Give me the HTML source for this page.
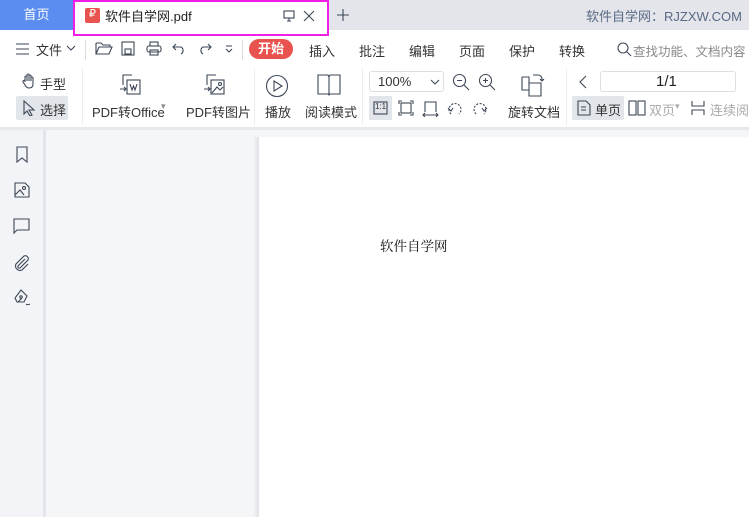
<!DOCTYPE html>
<html><head><meta charset="utf-8"><style>
*{margin:0;padding:0;box-sizing:border-box}
body{width:749px;height:517px;overflow:hidden;font-family:"Liberation Sans","Noto Sans CJK SC",sans-serif;background:#f5f6f8;position:relative;color:#333;font-size:13px}
.abs{position:absolute}
svg{position:absolute;fill:none;stroke:#3d4757;stroke-width:1.1}
.t{position:absolute;white-space:nowrap}
</style></head><body>
<div class="abs" style="left:0;top:0;width:749px;height:30px;background:#e3e5ea"></div>
<div class="abs" style="left:0;top:0;width:73px;height:30px;background:#5b8cf0;color:#fff;font-size:13px;text-align:center;line-height:30px">首页</div>
<div class="abs" style="left:73px;top:0;width:256px;height:36px;background:#fff;border:2px solid #f01ee6"></div>
<div class="abs" style="left:85px;top:8px;width:15px;height:15px;background:#e8534f;border-radius:2px"></div>
<div class="t" style="left:89px;top:7px;color:#fff;font-size:11px">₽</div>
<div class="t" style="left:105px;top:6px;font-size:13px;color:#222">软件自学网.pdf</div>
<svg style="left:282px;top:9px" width="14" height="14" viewBox="0 0 14 14" stroke="#aaa"><rect x="2" y="2" width="10" height="7"/><path d="M7 9v3M5 12h4"/></svg>
<svg style="left:302px;top:9px" width="14" height="14" viewBox="0 0 14 14" stroke="#aaa"><path d="M2 2l10 10M12 2L2 12"/></svg>
<svg style="left:335px;top:7px" width="16" height="16" viewBox="0 0 16 16" stroke="#3d4757" stroke-width="2"><path d="M8 2v12M2 8h12"/></svg>
<div class="t" style="left:586px;top:6px;color:#5a6a85;font-size:13px">软件自学网：RJZXW.COM</div>
<div class="abs" style="left:0;top:36px;width:749px;height:92px;background:#fff"></div>
<div class="abs" style="left:0;top:30px;width:73px;height:6px;background:#fff"></div>
<div class="abs" style="left:329px;top:30px;width:420px;height:6px;background:#fff"></div>
<!-- menu row -->
<svg style="left:15px;top:42px" width="16" height="14" viewBox="0 0 16 14"><path d="M1 2h13M1 7h13M1 12h13"/></svg>
<div class="t" style="left:36px;top:40px">文件</div>
<svg style="left:66px;top:44px" width="10" height="8" viewBox="0 0 10 8" stroke="#888"><path d="M1 2l4 4 4-4"/></svg>
<div class="abs" style="left:85px;top:40px;width:1px;height:20px;background:#ddd"></div>
<svg style="left:95px;top:41px" width="18" height="15" viewBox="0 0 18 15"><path d="M1 2h5l2 2h7v2M1 2v11h13l3-7H4l-3 7"/></svg>
<svg style="left:121px;top:41px" width="14" height="15" viewBox="0 0 14 15" stroke="#bbb"><rect x="1" y="1" width="12" height="13"/><rect x="4" y="8" width="6" height="5"/></svg>
<svg style="left:146px;top:41px" width="16" height="15" viewBox="0 0 16 15" stroke-width="1.5"><rect x="4" y="1" width="8" height="4"/><rect x="1" y="5" width="14" height="6" rx="2"/><rect x="4" y="9" width="8" height="5"/></svg>
<svg style="left:172px;top:42px" width="14" height="13" viewBox="0 0 14 13" stroke="#bbb"><path d="M4 2L1 5l3 3M1 5h8a4 4 0 010 7"/></svg>
<svg style="left:198px;top:42px" width="14" height="13" viewBox="0 0 14 13" stroke="#bbb"><path d="M10 2l3 3-3 3M13 5H5a4 4 0 000 7"/></svg>
<svg style="left:224px;top:45px" width="10" height="8" viewBox="0 0 10 8"><path d="M2 1h6M2 4l3 3 3-3"/></svg>
<div class="abs" style="left:242px;top:40px;width:1px;height:20px;background:#ddd"></div>
<div class="t" style="left:249px;top:39px;width:44px;height:20px;background:#e8534f;border-radius:10px;color:#fff;text-align:center;line-height:20px;font-weight:bold">开始</div>
<div class="t" style="left:309px;top:41px">插入</div>
<div class="t" style="left:359px;top:41px">批注</div>
<div class="t" style="left:409px;top:41px">编辑</div>
<div class="t" style="left:459px;top:41px">页面</div>
<div class="t" style="left:509px;top:41px">保护</div>
<div class="t" style="left:559px;top:41px">转换</div>
<svg style="left:617px;top:42px" width="15" height="15" viewBox="0 0 15 15" stroke="#999"><circle cx="6" cy="6" r="5"/><path d="M10 10l4 4"/></svg>
<div class="t" style="left:633px;top:41px;color:#888;font-size:12.5px">查找功能、文档内容</div>
<!-- toolbar -->
<svg style="left:21px;top:73px" width="16" height="16" viewBox="0 0 16 16"><path d="M4 9V4a1 1 0 012 0v4V2a1 1 0 012 0v6V3a1 1 0 012 0v5V5a1 1 0 012 0v6c0 3-2 4-4 4H8c-2 0-3-1-4-3L2 9a1 1 0 012-1"/></svg>
<div class="t" style="left:40px;top:74px">手型</div>
<div class="abs" style="left:16px;top:96px;width:52px;height:24px;background:#e2e5ea;border-radius:2px"></div>
<svg style="left:22px;top:100px" width="14" height="16" viewBox="0 0 14 16"><path d="M2 1v13l3-3 3 5 2-1-3-5h5z"/></svg>
<div class="t" style="left:40px;top:100px">选择</div>
<div class="abs" style="left:82px;top:68px;width:1px;height:57px;background:#eee"></div>
<svg style="left:118px;top:73px" width="24" height="24" viewBox="0 0 24 24"><path d="M5 12V2h9M2 16h6M6 14l2 2-2 2"/><rect x="9" y="7" width="13" height="14"/><path d="M12 11l2 6 1.5-4 1.5 4 2-6"/></svg>
<div class="t" style="left:92px;top:102px">PDF转Office</div>
<div class="t" style="left:161px;top:101px;color:#888;font-size:9px">▾</div>
<svg style="left:202px;top:73px" width="24" height="24" viewBox="0 0 24 24"><path d="M5 12V2h9M2 16h6M6 14l2 2-2 2"/><rect x="9" y="7" width="13" height="14"/><path d="M10 20l5-6 3 3 3-3"/><circle cx="18" cy="11" r="1.5"/></svg>
<div class="t" style="left:186px;top:102px">PDF转图片</div>
<div class="abs" style="left:254px;top:68px;width:1px;height:57px;background:#eee"></div>
<svg style="left:265px;top:74px" width="24" height="24" viewBox="0 0 24 24"><circle cx="12" cy="12" r="10.5"/><path d="M9 7v10l8-5z"/></svg>
<div class="t" style="left:265px;top:102px">播放</div>
<svg style="left:316px;top:73px" width="26" height="24" viewBox="0 0 26 24"><path d="M2 2h10l1 2 1-2h10v19H14l-1 1-1-1H2zM13 4v17"/></svg>
<div class="t" style="left:305px;top:102px">阅读模式</div>
<div class="abs" style="left:362px;top:68px;width:1px;height:57px;background:#eee"></div>
<div class="abs" style="left:369px;top:71px;width:75px;height:21px;border:1px solid #dcdfe4;border-radius:3px"></div>
<div class="t" style="left:378px;top:74px">100%</div>
<svg style="left:430px;top:78px" width="10" height="8" viewBox="0 0 10 8" stroke="#999"><path d="M1 2l4 4 4-4"/></svg>
<svg style="left:452px;top:73px" width="18" height="18" viewBox="0 0 18 18"><circle cx="7.5" cy="7.5" r="6"/><path d="M12 12l5 5M5 7.5h5"/></svg>
<svg style="left:478px;top:73px" width="18" height="18" viewBox="0 0 18 18"><circle cx="7.5" cy="7.5" r="6"/><path d="M12 12l5 5M5 7.5h5M7.5 5v5"/></svg>
<div class="abs" style="left:369px;top:96px;width:23px;height:24px;background:#e2e5ea"></div>
<svg style="left:373px;top:101px" width="15" height="14" viewBox="0 0 15 14"><rect x="1" y="1" width="13" height="12"/></svg>
<div class="t" style="left:375px;top:102px;font-size:8px">1:1</div>
<svg style="left:398px;top:100px" width="16" height="16" viewBox="0 0 16 16"><rect x="3" y="3" width="10" height="10"/><path d="M1 4V1h3M12 1h3v3M15 12v3h-3M4 15H1v-3"/></svg>
<svg style="left:422px;top:100px" width="17" height="17" viewBox="0 0 17 17"><path d="M3 12V2h11v10M1 15h15M3 13l-2 2 2 2M14 13l2 2-2 2"/></svg>
<svg style="left:447px;top:101px" width="16" height="14" viewBox="0 0 16 14"><path d="M4 13a6 6 0 1 1 8 0" stroke-dasharray="2 1.5"/><path d="M1 7l3 3 2-3"/></svg>
<svg style="left:472px;top:101px" width="16" height="14" viewBox="0 0 16 14"><path d="M4 13a6 6 0 1 1 8 0" stroke-dasharray="2 1.5"/><path d="M15 7l-3 3-2-3"/></svg>
<svg style="left:519px;top:72px" width="26" height="26" viewBox="0 0 26 26"><path d="M3 5h7v7M3 5v13h7M10 11h12v13H10z"/><path d="M14 3h5a4 4 0 014 4v2M21 7l2 2 2-2"/></svg>
<div class="t" style="left:508px;top:102px">旋转文档</div>
<div class="abs" style="left:566px;top:68px;width:1px;height:57px;background:#eee"></div>
<svg style="left:578px;top:75px" width="10" height="14" viewBox="0 0 10 14" stroke="#aaa"><path d="M8 1L2 7l6 6"/></svg>
<div class="abs" style="left:600px;top:71px;width:136px;height:21px;border:1px solid #dcdfe4;border-radius:3px"></div>
<div class="t" style="left:656px;top:73px;font-size:15px;color:#222">1/1</div>
<div class="abs" style="left:572px;top:96px;width:52px;height:24px;background:#e2e5ea;border-radius:2px"></div>
<svg style="left:577px;top:100px" width="14" height="16" viewBox="0 0 14 16"><path d="M1 1h8l4 4v10H1zM4 7h5M4 10h5"/></svg>
<div class="t" style="left:595px;top:100px">单页</div>
<svg style="left:628px;top:100px" width="18" height="16" viewBox="0 0 18 16" stroke="#bbb"><rect x="1" y="1" width="7" height="14"/><rect x="10" y="1" width="7" height="14"/></svg>
<div class="t" style="left:649px;top:100px;color:#aaa">双页</div>
<div class="t" style="left:675px;top:101px;color:#aaa;font-size:9px">▾</div>
<svg style="left:690px;top:100px" width="16" height="16" viewBox="0 0 16 16" stroke="#bbb"><path d="M2 1v5h12V1M2 15v-5h12v5"/></svg>
<div class="t" style="left:710px;top:100px;color:#aaa">连续阅读</div>
<div class="abs" style="left:0;top:127px;width:749px;height:3px;background:#e6e8ec"></div>
<!-- sidebar -->
<div class="abs" style="left:0;top:130px;width:43px;height:387px;background:#f3f4f7"></div>
<div class="abs" style="left:43px;top:130px;width:3px;height:387px;background:#e3e5ea"></div>
<svg style="left:15px;top:146px" width="14" height="17" viewBox="0 0 14 17"><path d="M2 1h10v15l-5-4-5 4z"/></svg>
<svg style="left:14px;top:182px" width="16" height="16" viewBox="0 0 16 16"><path d="M1 1h10l4 4v10H1zM1 13l5-5 4 5"/><circle cx="10" cy="6" r="1.5"/></svg>
<svg style="left:13px;top:218px" width="18" height="17" viewBox="0 0 18 17"><path d="M1 1h15v11H4l-3 3z"/></svg>
<svg style="left:13px;top:254px" width="18" height="18" viewBox="0 0 18 18"><path d="M12 5l-7 7a1.5 1.5 0 002 2l8-8a3 3 0 00-4-4l-8 8a4.5 4.5 0 006 6l6-6"/></svg>
<svg style="left:13px;top:289px" width="18" height="18" viewBox="0 0 18 18"><path d="M8 1l6 6-3 6H4L2 9zM5 13l4-4"/><circle cx="8" cy="8" r="1.2"/><path d="M13 15c1 1 2 1 4 0"/></svg>
<!-- page -->
<div class="abs" style="left:253px;top:137px;width:6px;height:380px;background:linear-gradient(to right,#f5f6f8,#dfe1e5)"></div>
<div class="abs" style="left:259px;top:137px;width:490px;height:380px;background:#fff"></div>
<div class="t" style="left:380px;top:235px;font-family:'Noto Serif CJK SC',serif;font-size:13.5px;color:#111">软件自学网</div>
</body></html>
